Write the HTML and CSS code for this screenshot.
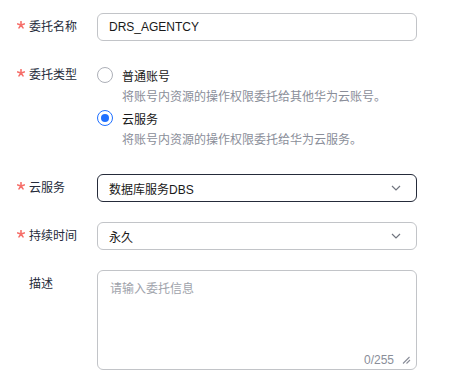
FILE: index.html
```html
<!DOCTYPE html>
<html lang="zh-CN">
<head>
    <meta charset="UTF-8">
    <title>创建委托</title>
    <link rel="stylesheet" href="styles.css">
</head>
<body>
<form class="form">
    <div class="row">
        <label class="label">
            <span class="star"><svg width="8" height="8" viewBox="0 0 8 8"><path d="M4 0.6 L4 4 M4 4 L7.3 2.9 M4 4 L6 6.9 M4 4 L2 6.9 M4 4 L0.7 2.9" stroke="#f66f6a" stroke-width="1.6" stroke-linecap="round"/></svg></span>委托名称
        </label>
        <div class="control">
            <input class="input" type="text" value="DRS_AGENTCY">
        </div>
    </div>

    <div class="row row-radio">
        <label class="label label-short">
            <span class="star"><svg width="8" height="8" viewBox="0 0 8 8"><path d="M4 0.6 L4 4 M4 4 L7.3 2.9 M4 4 L6 6.9 M4 4 L2 6.9 M4 4 L0.7 2.9" stroke="#f66f6a" stroke-width="1.6" stroke-linecap="round"/></svg></span>委托类型
        </label>
        <div class="control radios">
            <div class="option">
                <div class="radio-line"><span class="radio"></span>普通账号</div>
                <div class="desc">将账号内资源的操作权限委托给其他华为云账号。</div>
            </div>
            <div class="option">
                <div class="radio-line"><span class="radio checked"></span>云服务</div>
                <div class="desc">将账号内资源的操作权限委托给华为云服务。</div>
            </div>
        </div>
    </div>

    <div class="row">
        <label class="label">
            <span class="star"><svg width="8" height="8" viewBox="0 0 8 8"><path d="M4 0.6 L4 4 M4 4 L7.3 2.9 M4 4 L6 6.9 M4 4 L2 6.9 M4 4 L0.7 2.9" stroke="#f66f6a" stroke-width="1.6" stroke-linecap="round"/></svg></span>云服务
        </label>
        <div class="control">
            <div class="select active">
                <span>数据库服务DBS</span>
                <svg class="arrow" width="10" height="6" viewBox="0 0 10 6"><path d="M1 1 L5 5 L9 1" fill="none" stroke="#71757f" stroke-width="1.2"/></svg>
            </div>
        </div>
    </div>

    <div class="row">
        <label class="label">
            <span class="star"><svg width="8" height="8" viewBox="0 0 8 8"><path d="M4 0.6 L4 4 M4 4 L7.3 2.9 M4 4 L6 6.9 M4 4 L2 6.9 M4 4 L0.7 2.9" stroke="#f66f6a" stroke-width="1.6" stroke-linecap="round"/></svg></span>持续时间
        </label>
        <div class="control">
            <div class="select">
                <span>永久</span>
                <svg class="arrow" width="10" height="6" viewBox="0 0 10 6"><path d="M1 1 L5 5 L9 1" fill="none" stroke="#71757f" stroke-width="1.2"/></svg>
            </div>
        </div>
    </div>

    <div class="row">
        <label class="label"><span class="star"></span>描述</label>
        <div class="control">
            <div class="area-wrap">
                <textarea class="area" placeholder="请输入委托信息"></textarea>
                <div class="count">0/255
                    <svg width="9" height="8" viewBox="0 0 9 8"><path d="M1 7.5 L7.5 1 M4.5 7.5 L8 4" stroke="#8a8e99" stroke-width="1.1"/></svg>
                </div>
            </div>
        </div>
    </div>
</form>
</body>
</html>
```

FILE: styles.css
```css
* {
    padding: 0;
    margin: 0;
    box-sizing: border-box;
}

body {
    background-color: #fff;
    font-family: "Liberation Sans", "Noto Sans CJK SC", sans-serif;
    font-size: 12px;
    color: #252b3a;
}

.form {
    padding: 13px 0 0 17px;
}

.row {
    display: flex;
    margin-bottom: 20px;
}

.row-radio {
    padding-top: 4px;
    margin-bottom: 24px;
}

.label {
    width: 80px;
    flex: none;
    display: flex;
    line-height: 28px;
    height: 28px;
    color: #252b3a;
}

.label-short {
    line-height: 20px;
    height: 20px;
}

.star {
    width: 12px;
    flex: none;
    padding-top: 8px;
    line-height: 0;
}

.label-short .star {
    padding-top: 4px;
}

.control {
    width: 320px;
}

.input,
.select {
    width: 320px;
    height: 28px;
    border: 1px solid #c2c4c8;
    border-radius: 6px;
    padding: 0 11px;
    font-family: inherit;
    font-size: 12px;
    color: #191919;
    outline: none;
}

.select {
    display: flex;
    align-items: center;
    justify-content: space-between;
    padding-right: 15px;
}

.select.active {
    border-color: #252b3a;
}

.radios {
    display: flex;
    flex-direction: column;
    gap: 1px;
}

.radio-line {
    display: flex;
    align-items: center;
    height: 20px;
    color: #191919;
}

.radio {
    width: 16px;
    height: 16px;
    border: 1px solid #adb0b8;
    border-radius: 50%;
    margin-right: 9px;
    position: relative;
}

.radio.checked {
    border-color: #1e6fff;
}

.radio.checked::after {
    content: "";
    position: absolute;
    left: 3px;
    top: 3px;
    width: 8px;
    height: 8px;
    border-radius: 50%;
    background-color: #1e6fff;
}

.desc {
    line-height: 20px;
    padding-top: 2px;
    padding-left: 25px;
    color: #8a8e99;
}

.area-wrap {
    position: relative;
    height: 100px;
}

.area {
    width: 320px;
    height: 100px;
    border: 1px solid #c2c4c8;
    border-radius: 6px;
    padding: 8px 12px;
    resize: none;
    font-family: inherit;
    font-size: 12px;
    line-height: 20px;
    outline: none;
}

.area::placeholder {
    color: #a0a3ab;
}

.count {
    position: absolute;
    right: 6px;
    bottom: 3px;
    display: flex;
    align-items: center;
    gap: 8px;
    color: #8a8e99;
    font-size: 12px;
}
```
